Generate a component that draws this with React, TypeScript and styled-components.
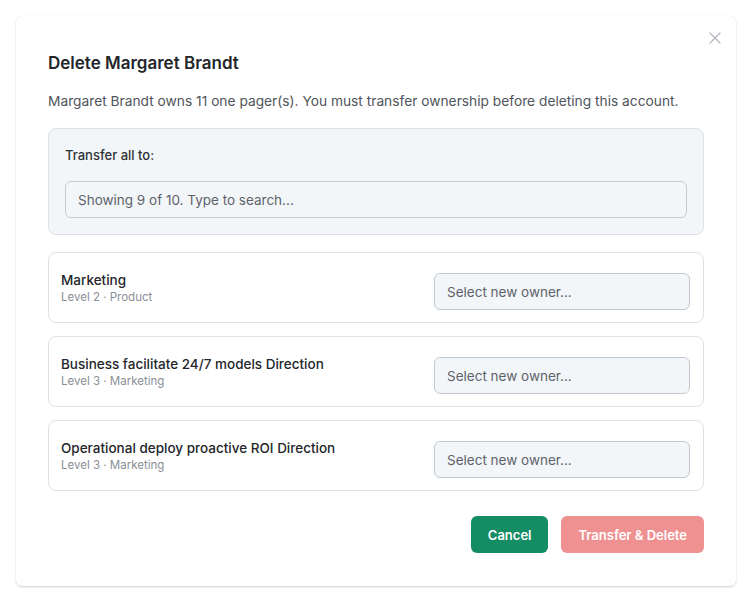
import styled, { createGlobalStyle } from 'styled-components';

const GlobalStyle = createGlobalStyle`
  * { box-sizing: border-box; }
  body {
    margin: 0;
    background: #ffffff;
    font-family: Inter, "Noto Sans", Arial, sans-serif;
    color: #1f2328;
  }
`;

const Page = styled.div`
  width: 752px;
  height: 603px;
  padding: 16px;
`;

const Modal = styled.div`
  position: relative;
  width: 720px;
  height: 570px;
  background: #ffffff;
  border-radius: 6px;
  box-shadow: 0 1px 2px rgba(0, 0, 0, 0.18), 0 0 1px rgba(0, 0, 0, 0.08);
  padding: 35px 32px 33px;
  display: flex;
  flex-direction: column;
`;

const CloseButton = styled.button`
  all: unset;
  position: absolute;
  top: 15px;
  right: 14px;
  width: 14px;
  height: 14px;
  color: #b3b6ba;
  display: flex;
  align-items: center;
  justify-content: center;
`;

const Title = styled.h2`
  margin: 0;
  font-size: 17px;
  line-height: 24px;
  font-weight: 600;
  color: #23262b;
`;

const Description = styled.p`
  margin: 16px 0 0;
  font-size: 13.75px;
  line-height: 20px;
  color: #50555c;
`;

const TransferAllBox = styled.div`
  margin-top: 17px;
  background: #f3f6f8;
  border: 1px solid #dde1e5;
  border-radius: 8px;
  padding: 16px;
  display: flex;
  flex-direction: column;
  gap: 16px;
`;

const Label = styled.div`
  font-size: 13px;
  line-height: 20px;
  font-weight: 500;
  color: #2e3237;
`;

const Field = styled.div<{ $width?: string; $offset?: number }>`
  width: ${(p) => p.$width ?? '100%'};
  height: 37px;
  margin-top: ${(p) => p.$offset ?? 0}px;
  border: 1px solid #c5cad0;
  border-radius: 6px;
  background: #f3f6f8;
  padding: 0 12px;
  display: flex;
  align-items: center;
  font-size: 13.5px;
  color: #5d636b;
`;

const Rows = styled.div`
  margin-top: 17px;
  display: flex;
  flex-direction: column;
  gap: 13px;
`;

const Row = styled.div`
  height: 71px;
  border: 1px solid #dde1e5;
  border-radius: 8px;
  padding: 0 13px 0 12px;
  display: flex;
  align-items: center;
  justify-content: space-between;
`;

const RowInfo = styled.div`
  display: flex;
  flex-direction: column;
`;

const RowTitle = styled.div`
  font-size: 13.5px;
  line-height: 18px;
  font-weight: 500;
  color: #23262b;
`;

const RowMeta = styled.div`
  font-size: 11.5px;
  line-height: 16px;
  color: #8a8f96;
`;

const Footer = styled.div`
  margin-top: 25px;
  display: flex;
  justify-content: flex-end;
  gap: 13px;
`;

const Button = styled.button<{ $variant: 'primary' | 'danger' }>`
  all: unset;
  height: 37px;
  padding: 0 17px;
  border-radius: 6px;
  font-family: Inter, "Noto Sans", Arial, sans-serif;
  font-size: 13px;
  font-weight: 600;
  color: #ffffff;
  display: flex;
  align-items: center;
  background: ${(p) => (p.$variant === 'primary' ? '#148c64' : '#ef9191')};
`;

const owners = [
  { title: 'Marketing', meta: 'Level 2 · Product' },
  { title: 'Business facilitate 24/7 models Direction', meta: 'Level 3 · Marketing' },
  { title: 'Operational deploy proactive ROI Direction', meta: 'Level 3 · Marketing' },
];

export default function App() {
  return (
    <Page>
      <GlobalStyle />
      <Modal>
        <CloseButton aria-label="Close">
          <svg width="12" height="12" viewBox="0 0 12 12" fill="none">
            <path d="M1 1L11 11M11 1L1 11" stroke="currentColor" strokeWidth="1.2" strokeLinecap="round" />
          </svg>
        </CloseButton>
        <Title>Delete Margaret Brandt</Title>
        <Description>
          Margaret Brandt owns 11 one pager(s). You must transfer ownership before deleting this account.
        </Description>
        <TransferAllBox>
          <Label>Transfer all to:</Label>
          <Field>Showing 9 of 10. Type to search...</Field>
        </TransferAllBox>
        <Rows>
          {owners.map((o) => (
            <Row key={o.title}>
              <RowInfo>
                <RowTitle>{o.title}</RowTitle>
                <RowMeta>{o.meta}</RowMeta>
              </RowInfo>
              <Field $width="256px" $offset={8}>
                Select new owner...
              </Field>
            </Row>
          ))}
        </Rows>
        <Footer>
          <Button $variant="primary">Cancel</Button>
          <Button $variant="danger">Transfer &amp; Delete</Button>
        </Footer>
      </Modal>
    </Page>
  );
}
